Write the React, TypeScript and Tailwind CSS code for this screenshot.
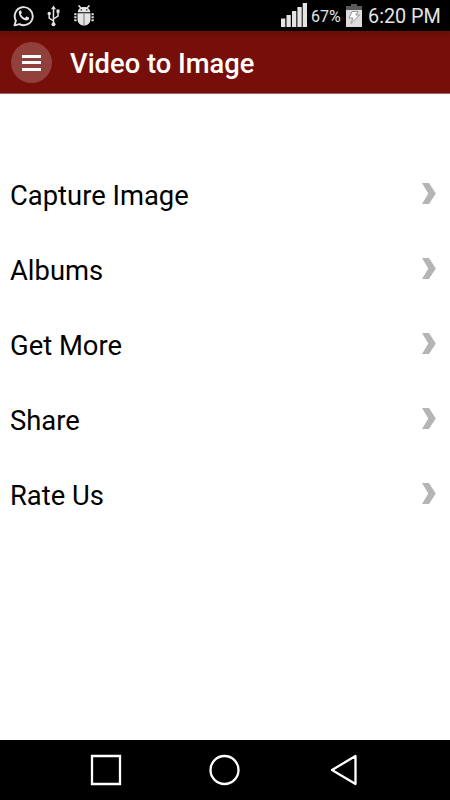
const items = ["Capture Image", "Albums", "Get More", "Share", "Rate Us"];

function WhatsAppIcon() {
  return (
    <svg width="22" height="22" viewBox="0 0 22 22" fill="none">
      <path
        d="M1.500 20.400 2.900 15.600A9 9 0 1 1 6.500 19.100Z"
        stroke="#e4e4e4"
        strokeWidth="1.900"
        strokeLinejoin="round"
      />
      <path
        d="M7.200 5.400C6.400 5.700 5.800 6.600 5.800 7.800c0 3.600 4.400 7.700 7.500 7.700 1.500 0 2.800-.9 2.900-2.400 0-.3-.1-.4-.3-.5l-2.100-1.100c-.3-.1-.5-.1-.7.2l-.9 1.100c-.2.2-.4.2-.6.1-1.700-.8-2.800-1.900-3.600-3.400-.1-.2-.1-.4.1-.6l.7-.9c.1-.2.1-.4 0-.6L8 5.600c-.2-.3-.5-.3-.8-.2Z"
        fill="#e4e4e4"
      />
    </svg>
  );
}

function UsbIcon() {
  return (
    <svg width="13" height="22" viewBox="0 0 13 22" fill="none">
      <path d="M6.500 3v16M6.500 16 2.200 13V9M6.500 14 11 11V6.500" stroke="#e4e4e4" strokeWidth="1.500" />
      <path d="M6.500.5 9 4.200H4Z" fill="#e4e4e4" />
      <circle cx="6.500" cy="19.200" r="2" fill="#e4e4e4" />
      <circle cx="2.200" cy="8.500" r="1.700" fill="#e4e4e4" />
      <path d="M9.500 4.500h3v3.300h-3z" fill="#e4e4e4" />
    </svg>
  );
}

function BugIcon() {
  return (
    <svg width="20" height="21" viewBox="0 0 20 21">
      <path d="M4.500.5 7 3M15.500.5 13 3" stroke="#e4e4e4" strokeWidth="1.600" />
      <path d="M3.800 7.300C3.800 3.900 6.300 1.900 10 1.900s6.200 2 6.200 5.400Z" fill="#e4e4e4" />
      <path d="M6.600 4.200H8v1.300H6.600zM12 4.200h1.400v1.300H12z" fill="#222" />
      <path d="M3.500 8.300h13v6c0 3.600-2.700 6.300-6.500 6.300s-6.500-2.700-6.500-6.300Z" fill="#e4e4e4" />
      <path d="M10 8.300v12.300" stroke="#777" strokeWidth="1" />
      <path
        d="M.3 9.300h2.200M.3 12.300h2.200M.3 15.300h2.200M17.500 9.300h2.200M17.500 12.300h2.200M17.500 15.300h2.200"
        stroke="#e4e4e4"
        strokeWidth="1.900"
      />
    </svg>
  );
}

function SignalIcon() {
  return (
    <svg width="26" height="24" viewBox="0 0 26 24" fill="#e4e4e4">
      <path d="M0 15.500h4.300V24H0zM5.500 12h4.300v12H5.500zM11 8h4.300v16H11zM16.400 4h4.300v20h-4.300zM21.700 0H26v24h-4.300z" />
    </svg>
  );
}

function BatteryIcon() {
  return (
    <svg width="16" height="23" viewBox="0 0 16 23">
      <path d="M5 0h6v2h5v4H0V2h5z" fill="#5a5a5a" />
      <path d="M0 6h16v17H0z" fill="#dcdcdc" />
      <path
        d="M6 7.500h6L9.800 11H13.500l-8.500 8.500L7 14H3Z"
        fill="#fff"
        stroke="#8c8c8c"
        strokeWidth=".9"
      />
    </svg>
  );
}

function Chevron() {
  return (
    <svg width="14" height="21" viewBox="0 0 14 21">
      <path d="M0 0h7l6.800 10.500L7 21H0l6.300-10.500Z" fill="#b5b5b5" />
    </svg>
  );
}

export default function App() {
  return (
    <div className="flex h-[800px] w-[450px] flex-col overflow-hidden bg-white font-['Roboto',sans-serif] text-black">
      <div className="flex h-[31px] shrink-0 items-start bg-black text-[#e4e4e4]">
        <div className="flex pt-[5px] pl-[13px]">
          <WhatsAppIcon />
          <div className="ml-3">
            <UsbIcon />
          </div>
          <div className="ml-[14px]">
            <BugIcon />
          </div>
        </div>
        <div className="ml-auto flex pr-[9px]">
          <div className="pt-[3px]">
            <SignalIcon />
          </div>
          <span className="ml-1 w-[31px] pt-1 text-base leading-[26px] whitespace-nowrap">67%</span>
          <div className="ml-[4px] pt-1">
            <BatteryIcon />
          </div>
          <span className="ml-[6px] w-[73px] origin-left scale-x-[0.99] pt-[3px] text-xl leading-[26px] whitespace-nowrap">
            6:20 PM
          </span>
        </div>
      </div>

      <header className="flex h-[63px] shrink-0 items-center border-b border-[#a06763] bg-[#760f09] bg-linear-to-b from-[#680e08] to-[#760f09] to-15% pl-[11px]">
        <button className="flex size-[41px] items-center justify-center rounded-full bg-[#91403b]">
          <span className="mt-px flex w-[19px] flex-col gap-[3.5px]">
            <span className="h-[3px] bg-white" />
            <span className="h-[3px] bg-white" />
            <span className="h-[3px] bg-white" />
          </span>
        </button>
        <h1 className="mt-1 ml-[18px] origin-left scale-x-[0.976] text-[28px] leading-8 font-medium whitespace-nowrap text-white">
          Video to Image
        </h1>
      </header>

      <main className="flex flex-1 flex-col pt-[63px]">
        {items.map((item) => (
          <div key={item} className="flex h-[75px] shrink-0 items-start justify-between pt-[22px] pr-[14px] pl-[10px]">
            <span className="mt-px origin-left scale-x-[0.978] text-[28px] leading-8">{item}</span>
            <div className="pt-1">
              <Chevron />
            </div>
          </div>
        ))}
      </main>

      <nav className="flex h-[60px] shrink-0 items-center bg-black">
        <svg className="ml-[90px]" width="32" height="32" viewBox="0 0 32 32" fill="none">
          <path d="M2 2h28v28H2z" stroke="#fff" strokeWidth="2.300" />
        </svg>
        <svg className="ml-[86px]" width="32" height="32" viewBox="0 0 32 32" fill="none">
          <circle cx="16.500" cy="16" r="14" stroke="#fff" strokeWidth="2.300" />
        </svg>
        <svg className="ml-[90px]" width="28" height="32" viewBox="0 0 28 32" fill="none">
          <path d="M25.500 2v28L2 16Z" stroke="#fff" strokeWidth="2.300" strokeLinejoin="round" />
        </svg>
      </nav>
    </div>
  );
}
